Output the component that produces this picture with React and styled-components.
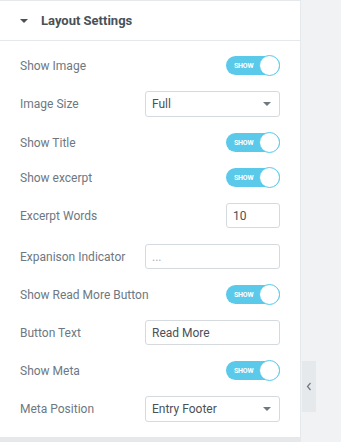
import React from "react";
import styled, { createGlobalStyle } from "styled-components";

const GlobalStyle = createGlobalStyle`
  html, body {
    margin: 0;
    padding: 0;
    background: #f1f2f4;
    font-family: Roboto, "Liberation Sans", sans-serif;
  }
`;

const Page = styled.div`
  position: relative;
  display: flex;
  width: 341px;
  height: 442px;
  overflow: hidden;
`;

const Column = styled.div`
  width: 301px;
  display: flex;
  flex-direction: column;
`;

const Panel = styled.div`
  background: #fff;
  border-top: 1px solid #e6e9ec;
  border-right: 1px solid #e6e9ec;
`;

const Header = styled.div`
  height: 39px;
  display: flex;
  align-items: center;
  padding-left: 20px;
  border-bottom: 1px solid #e6e9ec;
  color: #495157;
  font-size: 13px;
  font-weight: 700;
`;

const Caret = styled.span`
  width: 0;
  height: 0;
  border-left: 4px solid transparent;
  border-right: 4px solid transparent;
  border-top: 4px solid #495157;
  margin-right: 13px;
  margin-top: 1px;
`;

const Body = styled.div`
  display: flex;
  flex-direction: column;
  gap: 16px;
  padding: 15px 20px 15px 20px;
`;

const Row = styled.div`
  display: flex;
  align-items: center;
  justify-content: space-between;
  height: ${(p) => p.h}px;
`;

const Label = styled.span`
  font-size: 12px;
  color: #6d7882;
`;

const Toggle = styled.div`
  position: relative;
  width: 54px;
  height: 19px;
  border-radius: 10px;
  background: #5bc9ea;
  display: flex;
  align-items: center;
`;

const ToggleText = styled.span`
  font-size: 7px;
  font-weight: 700;
  color: #fff;
  margin-left: 8px;
  letter-spacing: -0.2px;
`;

const Knob = styled.span`
  position: absolute;
  right: 0;
  top: -1px;
  width: 19px;
  height: 19px;
  border-radius: 50%;
  background: #fff;
  border: 1px solid #5bc9ea;
`;

const Field = styled.div`
  box-sizing: border-box;
  width: ${(p) => p.w}px;
  height: ${(p) => p.h}px;
  border: 1px solid #d5dadf;
  border-radius: 3px;
  display: flex;
  align-items: center;
  justify-content: space-between;
  padding: 0 8px 0 6px;
  font-size: 12px;
  color: #495157;
`;

const Placeholder = styled.span`
  color: #a4afb7;
`;

const Arrow = styled.span`
  width: 0;
  height: 0;
  border-left: 4px solid transparent;
  border-right: 4px solid transparent;
  border-top: 4px solid #6d7882;
`;

const Footer = styled.div`
  flex: 1;
  background: #e6e9ec;
`;

const SideTab = styled.div`
  position: absolute;
  left: 302px;
  top: 361px;
  width: 14px;
  height: 51px;
  background: #e6e9ec;
  display: flex;
  align-items: center;
  justify-content: center;
`;

const Switch = () => (
  <Toggle>
    <ToggleText>SHOW</ToggleText>
    <Knob />
  </Toggle>
);

const Select = ({ value }) => (
  <Field w={135} h={26}>
    <span>{value}</span>
    <Arrow />
  </Field>
);

export default function App() {
  return (
    <Page>
      <GlobalStyle />
      <Column>
        <Panel>
          <Header>
            <Caret />
            Layout Settings
          </Header>
          <Body>
            <Row h={19}>
              <Label>Show Image</Label>
              <Switch />
            </Row>
            <Row h={26}>
              <Label>Image Size</Label>
              <Select value="Full" />
            </Row>
            <Row h={19}>
              <Label>Show Title</Label>
              <Switch />
            </Row>
            <Row h={19}>
              <Label>Show excerpt</Label>
              <Switch />
            </Row>
            <Row h={25}>
              <Label>Excerpt Words</Label>
              <Field w={54} h={25}>10</Field>
            </Row>
            <Row h={25}>
              <Label>Expanison Indicator</Label>
              <Field w={135} h={25}>
                <Placeholder>...</Placeholder>
              </Field>
            </Row>
            <Row h={19}>
              <Label>Show Read More Button</Label>
              <Switch />
            </Row>
            <Row h={25}>
              <Label>Button Text</Label>
              <Field w={135} h={25}>Read More</Field>
            </Row>
            <Row h={19}>
              <Label>Show Meta</Label>
              <Switch />
            </Row>
            <Row h={26}>
              <Label>Meta Position</Label>
              <Select value="Entry Footer" />
            </Row>
          </Body>
        </Panel>
        <Footer />
      </Column>
      <SideTab>
        <svg width="6" height="9" viewBox="0 0 6 9">
          <path d="M4.5 1 L1.5 4.5 L4.5 8" fill="none" stroke="#6d7882" strokeWidth="1.2" />
        </svg>
      </SideTab>
    </Page>
  );
}
